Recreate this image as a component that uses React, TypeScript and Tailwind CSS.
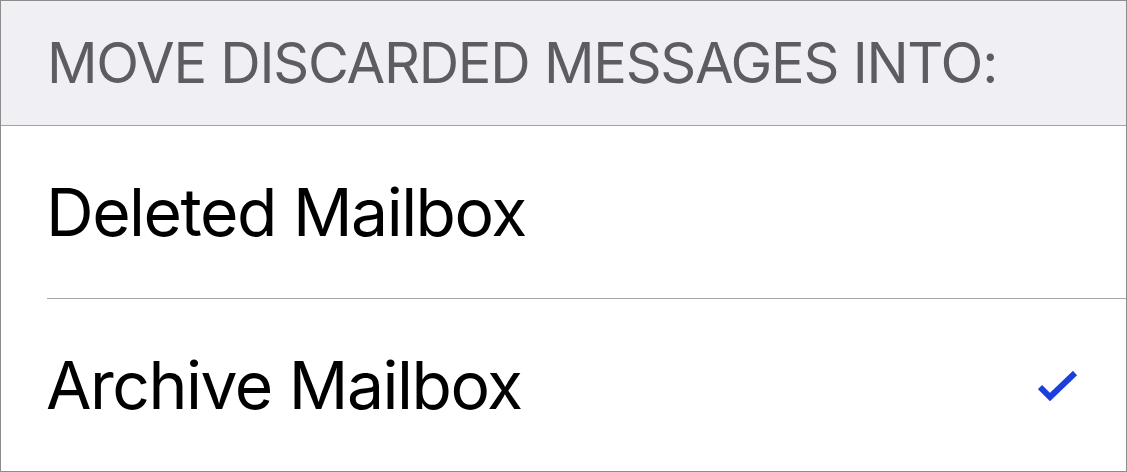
import React from "react";

export default function App() {
  return (
    <div
      className="w-[1127px] h-[472px] border border-[#8c8c8c] bg-white flex flex-col overflow-hidden"
      style={{ fontFamily: "Inter, 'Noto Sans', sans-serif" }}
    >
      <div className="h-[125px] bg-[#efeff4] border-b border-[#a3a3a3] flex items-center pl-[46px] shrink-0">
        <span className="text-[56px] leading-none text-[#5c5c61] tracking-[-1.25px]">
          MOVE DISCARDED MESSAGES INTO:
        </span>
      </div>
      <div className="h-[172px] flex items-center pl-[45px] shrink-0">
        <span className="text-[66px] leading-none text-black tracking-[-1.5px]">Deleted Mailbox</span>
      </div>
      <div className="ml-[46px] h-px bg-[#a8a8a8] shrink-0" />
      <div className="flex-1 flex items-center justify-between pl-[45px] pr-[48px]">
        <span className="text-[66px] leading-none text-black tracking-[-1.5px]">Archive Mailbox</span>
        <svg width="40" height="32" viewBox="0 0 40 32" className="mt-[4px]">
          <path d="M2 16 L12 26 L37 2" fill="none" stroke="#1b3fdc" strokeWidth="6" />
        </svg>
      </div>
    </div>
  );
}
